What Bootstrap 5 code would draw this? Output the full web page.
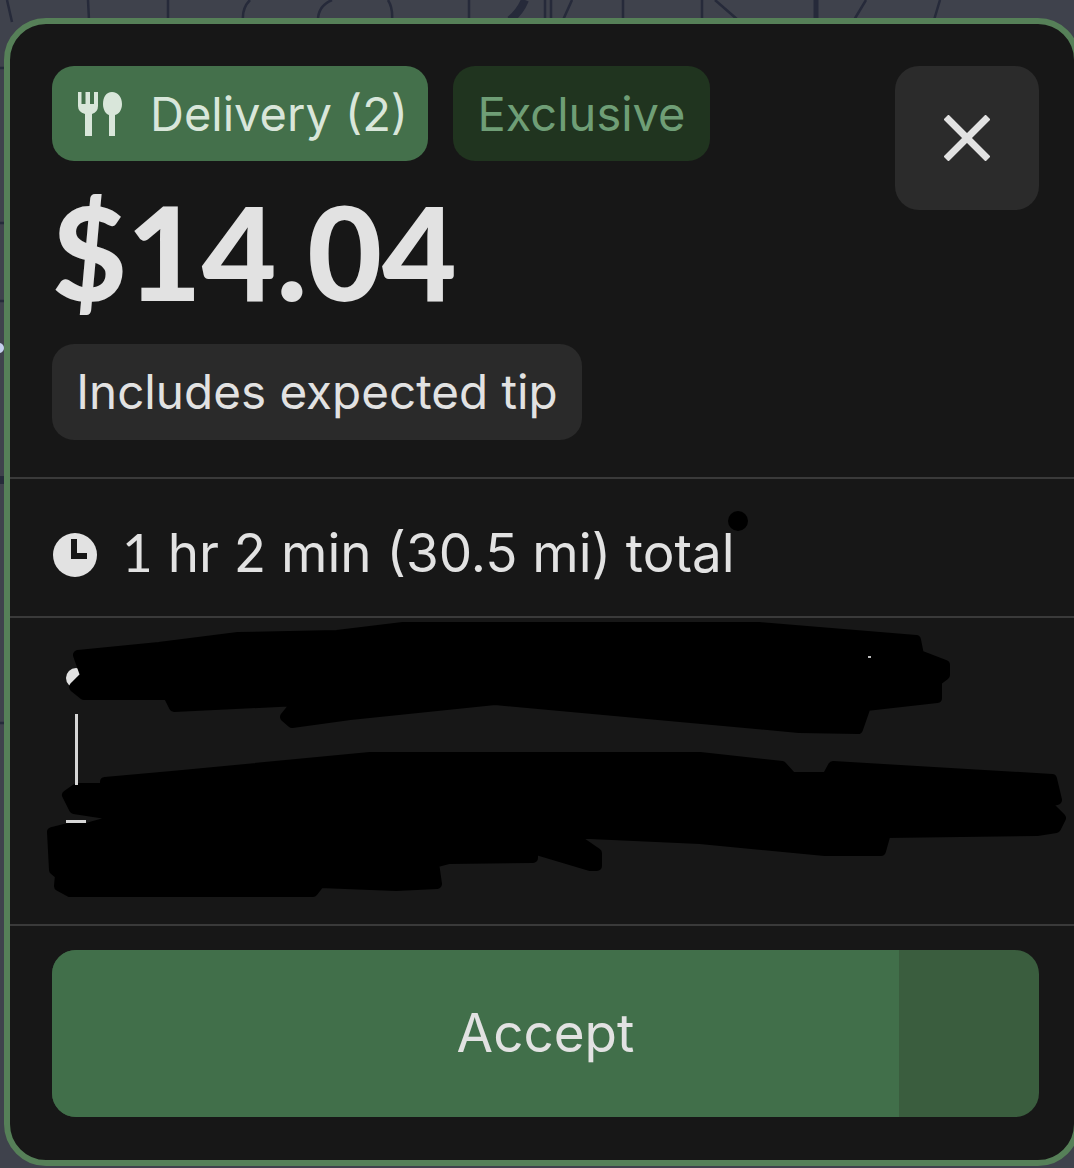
<!DOCTYPE html>
<html lang="en">
<head>
  <meta charset="UTF-8" />
  <meta name="viewport" content="width=device-width, initial-scale=1.0" />
  <title>Delivery offer</title>
  <link href="https://cdn.jsdelivr.net/npm/bootstrap@5.3.3/dist/css/bootstrap.min.css" rel="stylesheet">
  <style>
    html, body { height: 100%; }
    body {
      background: #3f424c;
      overflow: hidden;
      position: relative;
      font-family: Inter, "Noto Sans", sans-serif;
      color: #e2e2e2;
    }
    .map-lines { position: absolute; left: 0; top: 0; }
    .offer-panel {
      position: relative;
      width: 1076px;
      height: 1148px;
      margin: 18px 0 0 4px;
      background: #171717;
      border: 6px solid #568058;
      border-radius: 42px;
    }
    .offer-top { padding: 42px 35px 0 42px; height: 455px; border-bottom: 2px solid #3a3a3a; }
    .chip-row { column-gap: 25px; }
    .chip { height: 95px; border-radius: 22px; font-size: 47px; line-height: 1; }
    .chip-job { width: 376px; background: #44704b; color: #d9e6da; padding-left: 26px; }
    .chip-job-text { margin-left: 28px; }
    .chip-exclusive { width: 257px; background: #20341f; color: #6f9e76; justify-content: center; }
    .chip-tip { width: 530px; height: 96px; background: #2a2a2a; color: #e2e2e2; justify-content: center; font-size: 47.600px; }
    .close-square {
      width: 144px; height: 144px; background: #2b2b2b; border: 0; border-radius: 24px;
    }
    .price {
      font-family: Lato, sans-serif;
      font-size: 129px; font-weight: 900; line-height: 1;
      color: #e2e2e2;
      margin: 26px 0 28px 0;
    }
    .trip-row { height: 139px; padding: 14px 0 0 43px; border-bottom: 2px solid #3a3a3a; font-size: 53px; }
    .trip-text { margin: 0 0 4px 25px; }
    .foot-digit { font-family: Lato, sans-serif; }
    .route-block { position: relative; height: 308px; border-bottom: 2px solid #3a3a3a; }
    .route-marks { position: absolute; left: -10px; top: -618px; }
    .accept-wrap { padding: 24px 35px 0 42px; }
    .accept-btn {
      position: relative; width: 987px; height: 167px; border: 0; border-radius: 24px; overflow: hidden;
      background: #3a5d3e; color: #e2e2e2; font-size: 53px;
    }
    .accept-fill { width: 847px; background: #416f4a; }
    .accept-label { position: absolute; inset: 0; }
  </style>
</head>
<body>
  <svg class="map-lines" width="1074" height="1168" fill="none" stroke="#262a3a" stroke-width="2.500">
    <path d="M7 0 12 22M88 0 89 20M168 0 168 20M250 0Q242 8 243 20M332 0Q318 6 318 20M388 0Q393 8 392 20M469 0V20"/>
    <path d="M525 0Q520 12 510 20" stroke-width="8"/>
    <path d="M545 0V20M551 0V20M572 0 563 20M623 0V20M702 0V20M715 0 738 20M940 0 934 20M866 0 854 20"/>
    <path d="M816 0V20" stroke-width="5"/>
    <path d="M0 68H5M0 223H5M0 301H5M0 723H5"/>
    <path d="M0 480H4" stroke-width="8"/>
    <circle cx="-1" cy="348" r="5" fill="#c5d0ee" stroke="none"/>
  </svg>

  <div class="offer-panel">
    <div class="offer-top">
      <div class="d-flex justify-content-between align-items-start">
        <div>
          <div class="d-flex chip-row">
            <span class="chip chip-job d-flex align-items-center">
              <svg width="44" height="44" viewBox="0 0 44 44" fill="#d9e6da">
                <path d="M0 0h3.500v12h4V0h4.500v12h4V0H20v14q0 6-6 8v22H7V22q-7-2-7-8z"/>
                <path d="M34 0c6 0 10 5 10 12 0 6-3 10-7 11v21h-6V23c-3-1-6-5-6-11 0-7 3-12 9-12z"/>
              </svg>
              <span class="chip-job-text">Delivery (2)</span>
            </span>
            <span class="chip chip-exclusive d-flex align-items-center">Exclusive</span>
          </div>
          <div class="price">$14.04</div>
          <span class="chip chip-tip d-flex align-items-center">Includes expected tip</span>
        </div>
        <button class="close-square d-flex align-items-center justify-content-center" aria-label="Close">
          <svg width="46" height="46" viewBox="0 0 46 46" stroke="#e2e2e2" stroke-width="7">
            <path d="M2 2 44 44M44 2 2 44"/>
          </svg>
        </button>
      </div>
    </div>

    <div class="trip-row d-flex align-items-center">
      <svg width="44" height="44" viewBox="0 0 44 44">
        <circle cx="22" cy="22" r="22" fill="#e2e2e2"/>
        <path d="M21 6V23H34" fill="none" stroke="#171717" stroke-width="6"/>
      </svg>
      <span class="trip-text"><span class="foot-digit">1</span> hr 2 min (30.5 mi) total</span>
    </div>

    <div class="route-block">
      <svg class="route-marks" width="1074" height="1168">
        <circle cx="76" cy="678" r="10" fill="#e2e2e2"/>
        <circle cx="141" cy="689" r="8" fill="#cfcfcf"/>
        <g fill="#000" stroke="#000" stroke-width="10" stroke-linejoin="round">
          <path d="M78 655 159 647 238 637 337 635 403 627H759L916 640 919 655 945 665V675L937 681V698L866 706 858 729 799 728 495 700 350 715 292 723 285 717 298 701 174 707 168 695H84L74 687 84 677 119 675V671L84 672z"/>
          <path d="M105 782 172 776 370 757H700L782 766 792 777H827L833 766 1052 779 1057 800 1046 803 1061 818 1056 828 1037 831 886 833 881 851H825L700 839 568 833 597 853V866H590L533 849V858L449 859 434 863 437 884 396 886 320 883 313 892H70L59 886 60 875 54 870 52 832 68 828H86L126 817 74 809 67 795 77 788H105z"/>
        </g>
        <rect x="75" y="714" width="3" height="71" fill="#d6d6d6"/>
        <rect x="66" y="820" width="20" height="3" fill="#d6d6d6"/>
        <rect x="868" y="656" width="3" height="2" fill="#bdbdbd"/>
      </svg>
    </div>

    <div class="accept-wrap">
      <button class="accept-btn d-flex p-0">
        <span class="accept-fill d-block h-100"></span>
        <span class="accept-label d-flex align-items-center justify-content-center">Accept</span>
      </button>
    </div>
  </div>
  <svg class="map-lines" width="1074" height="1168">
    <circle cx="738" cy="521" r="10" fill="#000"/>
  </svg>
</body>
</html>
